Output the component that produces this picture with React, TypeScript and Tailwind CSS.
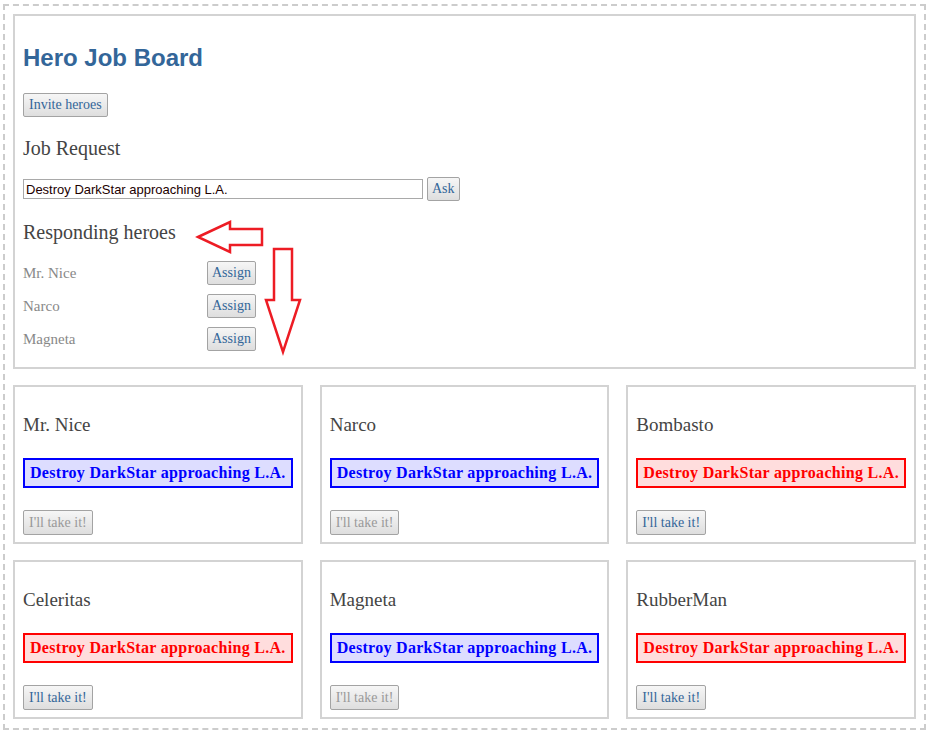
import React from "react";

const serif = "font-['Liberation_Serif',Georgia,serif]";

const heroes = ["Mr. Nice", "Narco", "Magneta"];

const cards = [
  { name: "Mr. Nice", accepted: true },
  { name: "Narco", accepted: true },
  { name: "Bombasto", accepted: false },
  { name: "Celeritas", accepted: false },
  { name: "Magneta", accepted: true },
  { name: "RubberMan", accepted: false },
];

const Btn = ({
  children,
  disabled,
  className = "",
}: {
  children: React.ReactNode;
  disabled?: boolean;
  className?: string;
}) => (
  <button
    className={`${serif} h-6 px-[4px] text-[14px] leading-none rounded-[2px] border border-[#a3a3a3] bg-gradient-to-b from-[#f6f6f6] to-[#dedede] ${
      disabled ? "text-[#999]" : "text-[#336699]"
    } ${className}`}
  >
    {children}
  </button>
);

const HeroCard = ({ name, accepted }: { name: string; accepted: boolean }) => {
  const box = accepted
    ? "border-[#0000ff] bg-[#ddddff] text-[#0000ff]"
    : "border-[#ff0000] bg-[#ffdddd] text-[#ff0000]";
  return (
    <div className="border-2 border-[#d3d3d3] px-2 pt-[27px] pb-[7px]">
      <div className={`${serif} text-[19px] leading-[22px] text-[#444]`}>{name}</div>
      <div
        className={`${serif} mt-[22px] h-[30px] border-2 flex items-center justify-center text-[16px] font-bold tracking-[0.3px] ${box}`}
      >
        Destroy DarkStar approaching L.A.
      </div>
      <Btn disabled={accepted} className="mt-[22px] h-[25px] px-[5px]">
        I'll take it!
      </Btn>
    </div>
  );
};

export default function App() {
  return (
    <div className="bg-white min-h-[734px] pt-[4px] pl-[3px]">
      <div className="w-[923px] border-2 border-dashed border-[#cccccc] p-2 pb-[9px]">
        <div className="relative border-2 border-[#d3d3d3] px-2 pb-4">
          <h1 className="mt-[28px] text-[24px] leading-[28px] font-bold text-[#336699] font-['Liberation_Sans',Arial,sans-serif]">
            Hero Job Board
          </h1>
          <Btn className="mt-[21px] px-[5px]">Invite heroes</Btn>
          <h3 className={`${serif} mt-[20px] text-[20px] leading-[22px] text-[#444]`}>Job Request</h3>
          <div className="mt-[18px] flex items-center gap-1">
            <input
              readOnly
              value="Destroy DarkStar approaching L.A."
              className="w-[400px] h-[20px] border border-[#a9a9a9] px-[2px] text-[13px] text-[#220000] font-['Liberation_Sans',Arial,sans-serif] outline-none"
            />
            <Btn className="px-[3px]">Ask</Btn>
          </div>
          <h3 className={`${serif} mt-[20px] text-[20px] leading-[22px] text-[#444]`}>Responding heroes</h3>
          <div className="mt-[18px] flex flex-col gap-[9px]">
            {heroes.map((h) => (
              <div key={h} className="flex items-center">
                <span className={`${serif} w-[184px] text-[15px] text-[#888]`}>{h}</span>
                <Btn>Assign</Btn>
              </div>
            ))}
          </div>

          <svg
            className="absolute left-0 top-0 pointer-events-none"
            width="320"
            height="360"
            fill="none"
            stroke="#ed1c24"
            strokeWidth="2.5"
          >
            <polygon points="183,221 215,206 215,213 247,213 247,229 215,229 215,236" />
            <polygon points="259,233 277,233 277,284 285,284 268,336 251,284 259,284" />
          </svg>
        </div>

        <div className="mt-[16px] grid grid-cols-3 gap-x-[17px] gap-y-[16px]">
          {cards.map((c) => (
            <HeroCard key={c.name} name={c.name} accepted={c.accepted} />
          ))}
        </div>
      </div>
    </div>
  );
}
